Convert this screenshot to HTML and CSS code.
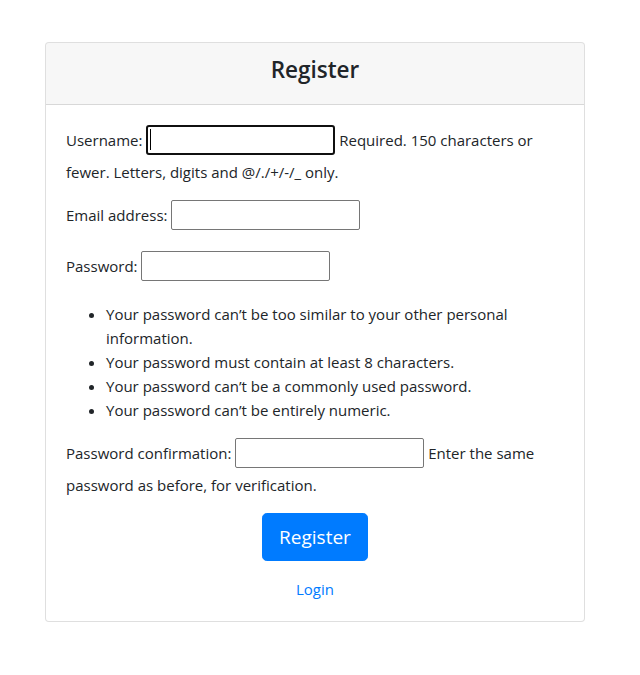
FILE: index.html
```html
<!DOCTYPE html>
<html lang="en">
<head>
<meta charset="utf-8">
<title>Register</title>
<link rel="stylesheet" href="styles.css">
</head>
<body>
<div class="page">
  <div class="card">
    <div class="card-header">
      <h4 class="card-title">Register</h4>
    </div>
    <div class="card-body">
      <form class="register-form">
        <p><label for="id_username">Username:</label> <span class="focus-wrap"><input type="text" id="id_username" class="field is-focused"><span class="caret"></span></span> <span class="helptext">Required. 150 characters or fewer. Letters, digits and @/./+/-/_ only.</span></p>
        <p><label for="id_email">Email address:</label> <input type="email" id="id_email" class="field"></p>
        <p><label for="id_password1">Password:</label> <input type="password" id="id_password1" class="field"></p>
        <ul class="rules">
          <li>Your password can’t be too similar to your other personal information.</li>
          <li>Your password must contain at least 8 characters.</li>
          <li>Your password can’t be a commonly used password.</li>
          <li>Your password can’t be entirely numeric.</li>
        </ul>
        <p><label for="id_password2">Password confirmation:</label> <input type="password" id="id_password2" class="field"> <span class="helptext">Enter the same password as before, for verification.</span></p>
        <div class="actions">
          <button type="button" class="btn-primary">Register</button>
        </div>
        <p class="login-line"><a href="#" class="login-link">Login</a></p>
      </form>
    </div>
  </div>
</div>
</body>
</html>
```
FILE: styles.css
```css
html, body {
  margin: 0;
  padding: 0;
  background: #fff;
}
body {
  font-family: "Open Sans", "Noto Sans", sans-serif;
  font-size: 15px;
  line-height: 24px;
  color: #212529;
}
.page {
  padding: 42px 0 0 45px;
}
.card {
  width: 540px;
  box-sizing: border-box;
  border: 1px solid rgba(0,0,0,.125);
  border-radius: 4px;
  background: #fff;
}
.card-header {
  padding: 12px 20px;
  background: rgba(0,0,0,.03);
  border-bottom: 1px solid rgba(0,0,0,.125);
  border-radius: 3px 3px 0 0;
}
.card-title {
  margin: 0 0 8px;
  font-size: 22.5px;
  font-weight: 600;
  line-height: 29px;
  text-align: center;
}
.card-body {
  padding: 20px;
}
.register-form p {
  margin: 0 0 16px;
}
.field {
  box-sizing: border-box;
  width: 189px;
  height: 30px;
  margin: 0 0 5px;
  padding: 2px 3px;
  border: 1px solid #767676;
  border-radius: 2px;
  font: inherit;
  vertical-align: baseline;
  background: #fff;
}
.focus-wrap {
  position: relative;
  display: inline-block;
}
.field.is-focused {
  border: 2px solid #101010;
  border-radius: 3px;
  outline: none;
}
.caret {
  position: absolute;
  left: 4px;
  top: 4px;
  width: 1px;
  height: 21px;
  background: #000;
}
.rules {
  margin: 0 0 16px;
  padding-left: 40px;
}
.actions {
  text-align: center;
  margin-bottom: 16px;
}
.btn-primary {
  font: inherit;
  font-size: 19px;
  line-height: 30px;
  padding: 8px 16px;
  color: #fff;
  background: #007bff;
  border: 1px solid #007bff;
  border-radius: 4.8px;
}
.login-line {
  text-align: center;
}
.register-form .login-line {
  margin-bottom: 0;
}
.login-link {
  color: #007bff;
  text-decoration: none;
}
```
